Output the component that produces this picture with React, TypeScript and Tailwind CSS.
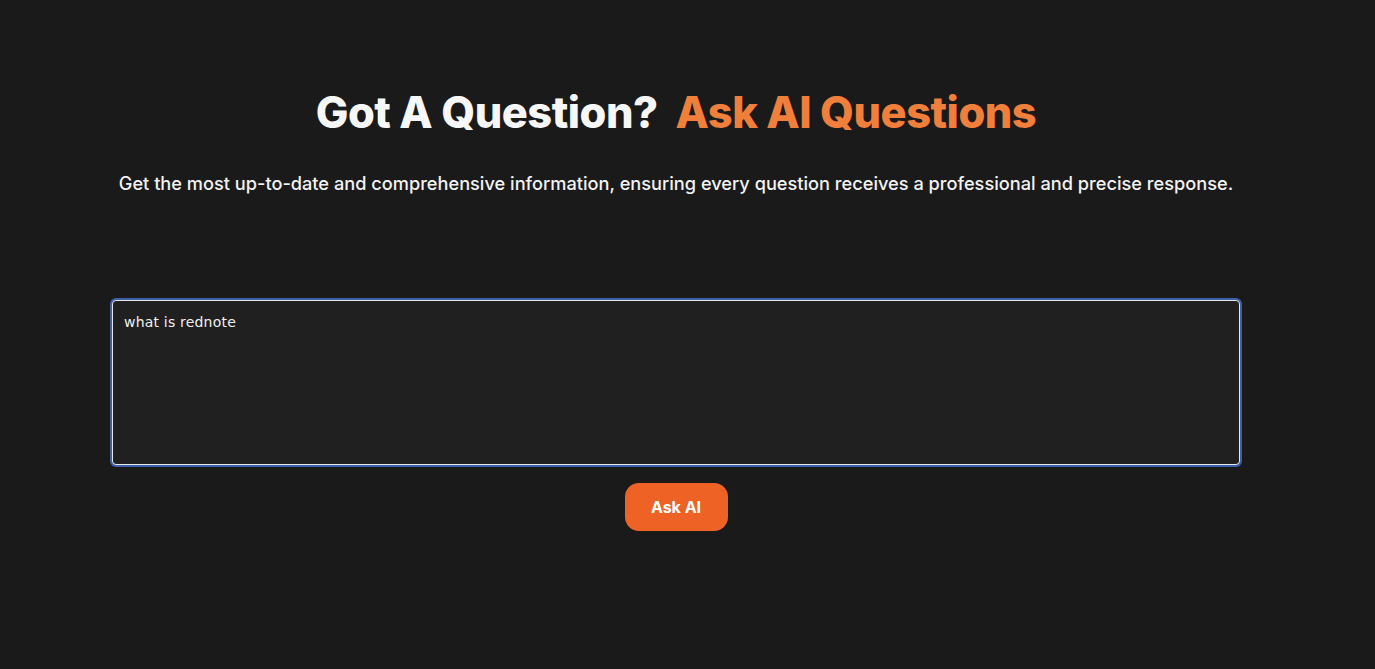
import React, { useState } from "react";

const App = () => {
  const [question, setQuestion] = useState("what is rednote");

  return (
    <main className="w-full min-h-[669px] bg-[#1a1a1a] font-['Inter','Noto_Sans',sans-serif] text-white">
      <section className="w-[1128px] ml-[112px] flex flex-col items-center pt-[84px]">
        <h1 className="text-[43.4px] leading-[56px] font-[800] tracking-[-0.5px] whitespace-pre">
          <span className="text-[#f7f7f7]">Got A Question?  </span>
          <span className="text-[#ef7f3b]">Ask AI Questions</span>
        </h1>
        <p className="mt-[29px] text-[18.2px] leading-[28px] font-[500] text-[#f2f2f2] whitespace-nowrap">
          Get the most up-to-date and comprehensive information, ensuring every question receives a professional and precise response.
        </p>
        <div className="w-full mt-[103px]">
          <textarea
            autoFocus
            value={question}
            onChange={(e) => setQuestion(e.target.value)}
            className="w-full h-[165px] block resize-none rounded-[4px] bg-[#202020] border border-[#e8e8e8] outline-none ring-2 ring-[#3b5fa8] px-[11px] py-[10px] text-[14px] leading-[22px] text-[#f0f0f0] font-['DejaVu_Sans','Noto_Sans',sans-serif] tracking-[0.2px]"
          />
        </div>
        <button className="mt-[18px] w-[103px] h-[48px] rounded-[14px] bg-[#ee6325] text-[16px] font-[700] text-white">
          Ask AI
        </button>
      </section>
    </main>
  );
};

export default App;
